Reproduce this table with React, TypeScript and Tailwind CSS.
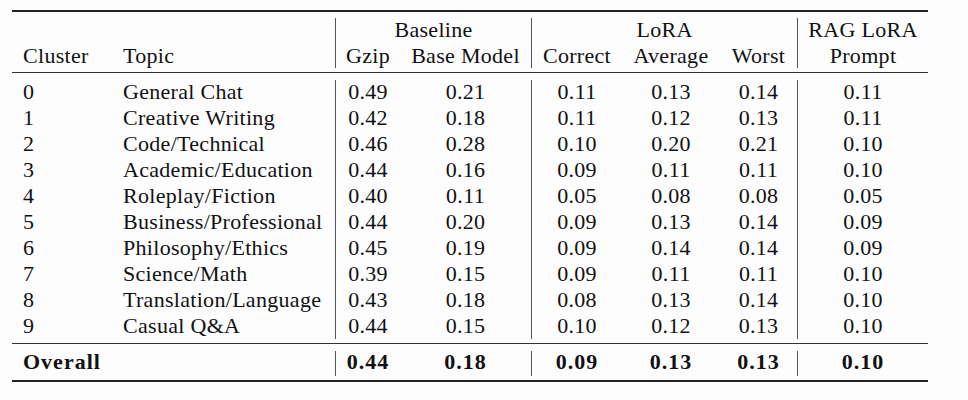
import React from "react";

const rows: [string, string, string, string, string, string, string, string][] = [
  ["0", "General Chat", "0.49", "0.21", "0.11", "0.13", "0.14", "0.11"],
  ["1", "Creative Writing", "0.42", "0.18", "0.11", "0.12", "0.13", "0.11"],
  ["2", "Code/Technical", "0.46", "0.28", "0.10", "0.20", "0.21", "0.10"],
  ["3", "Academic/Education", "0.44", "0.16", "0.09", "0.11", "0.11", "0.10"],
  ["4", "Roleplay/Fiction", "0.40", "0.11", "0.05", "0.08", "0.08", "0.05"],
  ["5", "Business/Professional", "0.44", "0.20", "0.09", "0.13", "0.14", "0.09"],
  ["6", "Philosophy/Ethics", "0.45", "0.19", "0.09", "0.14", "0.14", "0.09"],
  ["7", "Science/Math", "0.39", "0.15", "0.09", "0.11", "0.11", "0.10"],
  ["8", "Translation/Language", "0.43", "0.18", "0.08", "0.13", "0.14", "0.10"],
  ["9", "Casual Q&A", "0.44", "0.15", "0.10", "0.12", "0.13", "0.10"],
];

// columns: cluster | topic | sep | gzip | base | sep | correct | average | worst | sep | rag
const cols =
  "grid grid-cols-[100px_223px_1px_64px_131px_1px_90px_98px_77px_1px_130px]";

function Sep({ span, cls }: { span: string; cls: string }) {
  return <div className={`bg-[#555] w-px ${span} ${cls}`} />;
}

export default function App() {
  return (
    <div
      className="w-[968px] h-[400px] bg-[#fdfdfe] text-[#111] text-[22px] tracking-[0.3px] leading-[26px] pt-[10px] pl-[12px]"
      style={{ fontFamily: '"Liberation Serif", "Times New Roman", serif' }}
    >
      <div className="w-[916px]">
        {/* top rule */}
        <div className="h-[2px] bg-[#222]" />

        {/* header */}
        <div className={`${cols} grid-rows-[26px_26px] pt-[5px] pb-[3px]`}>
          <div className="col-start-1 row-start-2 pl-[11px]">Cluster</div>
          <div className="col-start-2 row-start-2 pl-[11px]">Topic</div>
          <Sep span="col-start-3 row-start-1 row-span-2" cls="mt-[1px] mb-[1px]" />
          <div className="col-start-4 col-span-2 row-start-1 text-center">Baseline</div>
          <div className="col-start-4 row-start-2 text-center">Gzip</div>
          <div className="col-start-5 row-start-2 text-center">Base Model</div>
          <Sep span="col-start-6 row-start-1 row-span-2" cls="mt-[1px] mb-[1px]" />
          <div className="col-start-7 col-span-3 row-start-1 text-center">LoRA</div>
          <div className="col-start-7 row-start-2 text-center">Correct</div>
          <div className="col-start-8 row-start-2 text-center">Average</div>
          <div className="col-start-9 row-start-2 text-center">Worst</div>
          <Sep span="col-start-10 row-start-1 row-span-2" cls="mt-[1px] mb-[1px]" />
          <div className="col-start-11 row-start-1 text-center">RAG LoRA</div>
          <div className="col-start-11 row-start-2 text-center">Prompt</div>
        </div>

        {/* mid rule */}
        <div className="h-px bg-[#333]" />

        {/* body */}
        <div className={`${cols} pt-[6px] pb-[4px]`}>
          {rows.map((r, i) => (
            <React.Fragment key={r[0]}>
              <div className="col-start-1 pl-[11px]" style={{ gridRowStart: i + 1 }}>{r[0]}</div>
              <div className="col-start-2 pl-[11px]" style={{ gridRowStart: i + 1 }}>{r[1]}</div>
              <div className="col-start-4 text-center" style={{ gridRowStart: i + 1 }}>{r[2]}</div>
              <div className="col-start-5 text-center" style={{ gridRowStart: i + 1 }}>{r[3]}</div>
              <div className="col-start-7 text-center" style={{ gridRowStart: i + 1 }}>{r[4]}</div>
              <div className="col-start-8 text-center" style={{ gridRowStart: i + 1 }}>{r[5]}</div>
              <div className="col-start-9 text-center" style={{ gridRowStart: i + 1 }}>{r[6]}</div>
              <div className="col-start-11 text-center" style={{ gridRowStart: i + 1 }}>{r[7]}</div>
            </React.Fragment>
          ))}
          <Sep span="col-start-3 row-start-1 row-span-10" cls="mt-[1px]" />
          <Sep span="col-start-6 row-start-1 row-span-10" cls="mt-[1px]" />
          <Sep span="col-start-10 row-start-1 row-span-10" cls="mt-[1px]" />
        </div>

        {/* rule */}
        <div className="h-px bg-[#333]" />

        {/* overall */}
        <div className={`${cols} pt-[5px] pb-[5px] font-bold tracking-[1px]`}>
          <div className="col-start-1 col-span-2 pl-[11px]">Overall</div>
          <Sep span="col-start-3" cls="mt-[2px] -mb-[1px]" />
          <div className="col-start-4 text-center">0.44</div>
          <div className="col-start-5 text-center">0.18</div>
          <Sep span="col-start-6" cls="mt-[2px] -mb-[1px]" />
          <div className="col-start-7 text-center">0.09</div>
          <div className="col-start-8 text-center">0.13</div>
          <div className="col-start-9 text-center">0.13</div>
          <Sep span="col-start-10" cls="mt-[2px] -mb-[1px]" />
          <div className="col-start-11 text-center">0.10</div>
        </div>

        {/* bottom rule */}
        <div className="h-[2px] bg-[#222]" />
      </div>
    </div>
  );
}
